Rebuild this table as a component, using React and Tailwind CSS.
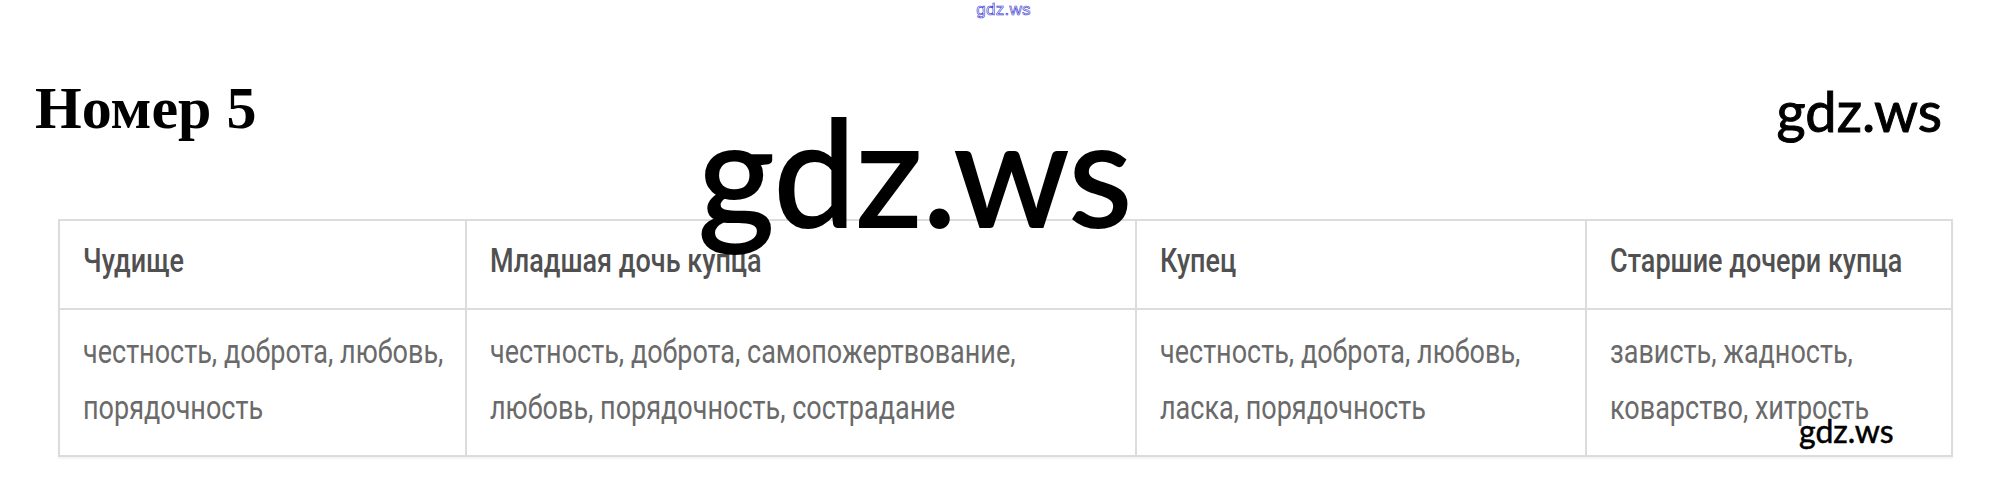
import React from "react";

const headers = ["Чудище", "Младшая дочь купца", "Купец", "Старшие дочери купца"];
const cells = [
  ["честность, доброта, любовь,", "порядочность"],
  ["честность, доброта, самопожертвование,", "любовь, порядочность, сострадание"],
  ["честность, доброта, любовь,", "ласка, порядочность"],
  ["зависть, жадность,", "коварство, хитрость"],
];

export default function App() {
  return (
    <div className="relative w-[2007px] h-[501px] bg-white overflow-hidden">
      <div className="flex justify-center h-[20px]">
        <span className="font-['Liberation_Sans',Arial,sans-serif] text-[17px] leading-[20px] tracking-[0.3px] text-transparent [-webkit-text-stroke:0.6px_#2f2fd0]">
          gdz.ws
        </span>
      </div>

      <div className="flex items-start justify-between pl-[35px] pr-[65px] mt-[58px] h-[60px]">
        <h1 className="font-['Liberation_Serif','Times_New_Roman',serif] font-bold text-[60px] leading-none text-black">
          Номер 5
        </h1>
        <span className="font-['Lato',sans-serif] text-[56px] leading-none text-black mt-[5px] [-webkit-text-stroke:1px_#000]">
          gdz.ws
        </span>
      </div>

      <div className="ml-[58px] mt-[81px] w-[1895px] border-l-2 border-t-2 border-[#dcdcdc] grid grid-cols-[407px_670px_450px_366px] shadow-[0_2px_2px_rgba(0,0,0,0.05)] font-['Roboto',sans-serif]">
        {headers.map((h) => (
          <div key={h} className="h-[89px] border-r-2 border-b-2 border-[#dcdcdc] pl-[23px] pt-[25px]">
            <div className="text-[27px] leading-[30px] font-medium text-[#505050] scale-y-[1.2] origin-center whitespace-nowrap">
              {h}
            </div>
          </div>
        ))}
        {cells.map((lines, i) => (
          <div key={i} className="h-[147px] border-r-2 border-b-2 border-[#dcdcdc] pl-[23px] pt-[25px]">
            <div className="text-[27px] leading-[45px] text-[#6a6a6a] scale-y-[1.25] origin-center">
              {lines.map((l) => (
                <div key={l} className="whitespace-nowrap">{l}</div>
              ))}
            </div>
          </div>
        ))}
      </div>

      <span className="absolute left-[698px] top-[97px] font-['Lato',sans-serif] text-[147px] leading-none text-black [-webkit-text-stroke:2px_#000]">
        gdz.ws
      </span>
      <span className="absolute left-[1799px] top-[415px] font-['Lato',sans-serif] text-[32px] leading-none text-black [-webkit-text-stroke:0.5px_#000]">
        gdz.ws
      </span>
    </div>
  );
}
